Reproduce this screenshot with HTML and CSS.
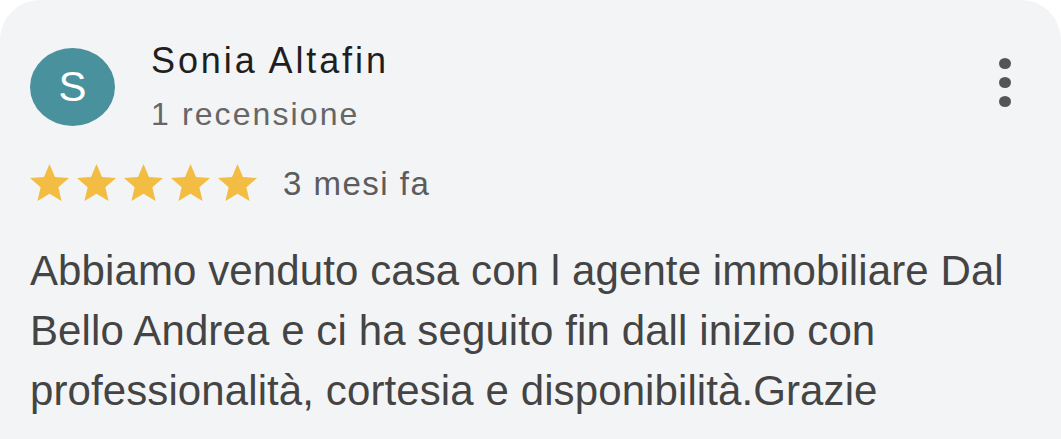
FILE: index.html
```html
<!DOCTYPE html>
<html lang="it">
<head>
    <meta charset="UTF-8">
    <meta name="viewport" content="width=device-width, initial-scale=1.0">
    <title>Recensione</title>
    <link rel="stylesheet" href="styles.css">
</head>
<body>

<div class="review">
    <div class="review-header">
        <div class="avatar">S</div>
        <div class="author">
            <div class="author-name">Sonia Altafin</div>
            <div class="author-count">1 recensione</div>
        </div>
        <div class="menu">
            <span class="dot"></span>
            <span class="dot"></span>
            <span class="dot"></span>
        </div>
    </div>

    <div class="rating">
        <div class="stars">
            <svg class="star" viewBox="2 2 20 19" preserveAspectRatio="none"><path d="M12 17.27L18.18 21l-1.64-7.03L22 9.24l-7.19-.61L12 2 9.19 8.63 2 9.24l5.46 4.73L5.82 21z"/></svg>
            <svg class="star" viewBox="2 2 20 19" preserveAspectRatio="none"><path d="M12 17.27L18.18 21l-1.64-7.03L22 9.24l-7.19-.61L12 2 9.19 8.63 2 9.24l5.46 4.73L5.82 21z"/></svg>
            <svg class="star" viewBox="2 2 20 19" preserveAspectRatio="none"><path d="M12 17.27L18.18 21l-1.64-7.03L22 9.24l-7.19-.61L12 2 9.19 8.63 2 9.24l5.46 4.73L5.82 21z"/></svg>
            <svg class="star" viewBox="2 2 20 19" preserveAspectRatio="none"><path d="M12 17.27L18.18 21l-1.64-7.03L22 9.24l-7.19-.61L12 2 9.19 8.63 2 9.24l5.46 4.73L5.82 21z"/></svg>
            <svg class="star" viewBox="2 2 20 19" preserveAspectRatio="none"><path d="M12 17.27L18.18 21l-1.64-7.03L22 9.24l-7.19-.61L12 2 9.19 8.63 2 9.24l5.46 4.73L5.82 21z"/></svg>
        </div>
        <span class="date">3 mesi fa</span>
    </div>

    <p class="review-text">Abbiamo venduto casa con l agente immobiliare Dal Bello Andrea e ci ha seguito fin dall inizio con professionalità, cortesia e disponibilità.Grazie</p>
</div>

</body>
</html>
```

FILE: styles.css
```css
body {
    font-family: "Liberation Sans", Arial, sans-serif;
    background-color: #ffffff;
    margin: 0;
}

.review {
    background-color: #f3f4f6;
    border-radius: 40px 40px 0 0;
    height: 439px;
    box-sizing: border-box;
    padding: 40px 48px 0 30px;
}

.review-header {
    display: flex;
    align-items: center;
}

.avatar {
    width: 85px;
    height: 78px;
    border-radius: 50%;
    background-color: #4a919e;
    color: #ffffff;
    font-size: 42px;
    display: flex;
    align-items: center;
    justify-content: center;
}

.author {
    margin-left: 36px;
}

.author-name {
    font-size: 36px;
    line-height: 42px;
    color: #1f1f1f;
    letter-spacing: 2.9px;
}

.author-count {
    font-size: 32px;
    line-height: 40px;
    margin-top: 12px;
    color: #666666;
    letter-spacing: 2.1px;
}

.menu {
    margin-left: auto;
    align-self: flex-start;
    margin-top: 18px;
    margin-right: 2px;
    display: flex;
    flex-direction: column;
    gap: 8px;
}

.dot {
    width: 12px;
    height: 11px;
    border-radius: 50%;
    background-color: #555555;
}

.rating {
    display: flex;
    align-items: center;
    margin-top: 27px;
}

.stars {
    display: flex;
    gap: 8px;
}

.star {
    width: 39px;
    height: 37px;
    fill: #f2bd42;
}

.date {
    margin-left: 26px;
    font-size: 33px;
    color: #5c5c5c;
    letter-spacing: 1.5px;
    margin-top: 4px;
}

.review-text {
    margin: 38px 0 0;
    font-size: 42px;
    line-height: 60px;
    color: #444444;
    letter-spacing: 0.1px;
}
```
